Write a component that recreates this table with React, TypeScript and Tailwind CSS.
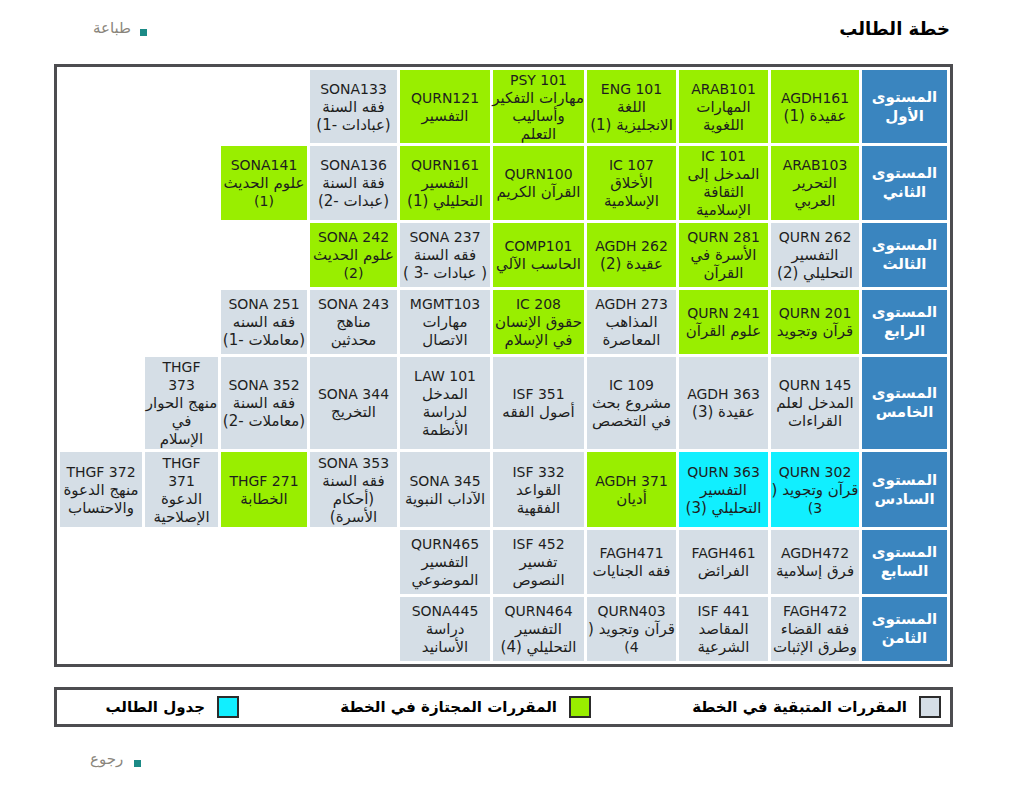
import React from 'react';

type Kind = 'g' | 's' | 'c';
interface Course {
  l: string[];
  k: Kind;
}

const bgOf: Record<Kind, string> = {
  g: 'bg-[#99ee00]',
  s: 'bg-[#d5dee6]',
  c: 'bg-[#11efff]',
};

const c = (k: Kind, ...l: string[]): Course => ({ k, l });

const LEVELS: { name: string[]; h: string; cells: Course[] }[] = [
  {
    name: ['المستوى', 'الأول'],
    h: 'h-[73px]',
    cells: [
      c('g', 'AGDH161', 'عقيدة (1)'),
      c('g', 'ARAB101', 'المهارات', 'اللغوية'),
      c('g', 'ENG 101', 'اللغة', 'الانجليزية (1)'),
      c('g', 'PSY 101', 'مهارات التفكير', 'وأساليب', 'التعلم'),
      c('g', 'QURN121', 'التفسير'),
      c('s', 'SONA133', 'فقه السنة', '(عبادات -1)'),
    ],
  },
  {
    name: ['المستوى', 'الثاني'],
    h: 'h-[74px]',
    cells: [
      c('g', 'ARAB103', 'التحرير', 'العربي'),
      c('g', 'IC 101', 'المدخل إلى', 'الثقافة', 'الإسلامية'),
      c('g', 'IC 107', 'الأخلاق', 'الإسلامية'),
      c('g', 'QURN100', 'القرآن الكريم'),
      c('g', 'QURN161', 'التفسير', 'التحليلي (1)'),
      c('s', 'SONA136', 'فقة السنة', '(عبدات -2)'),
      c('g', 'SONA141', 'علوم الحديث', '(1)'),
    ],
  },
  {
    name: ['المستوى', 'الثالث'],
    h: 'h-[64px]',
    cells: [
      c('s', 'QURN 262', 'التفسير', 'التحليلي (2)'),
      c('g', 'QURN 281', 'الأسرة في', 'القرآن'),
      c('g', 'AGDH 262', 'عقيدة (2)'),
      c('g', 'COMP101', 'الحاسب الآلي'),
      c('s', 'SONA 237', 'فقه السنة', '( عبادات -3 )'),
      c('g', 'SONA 242', 'علوم الحديث', '(2)'),
    ],
  },
  {
    name: ['المستوى', 'الرابع'],
    h: 'h-[64px]',
    cells: [
      c('g', 'QURN 201', 'قرآن وتجويد'),
      c('g', 'QURN 241', 'علوم القرآن'),
      c('s', 'AGDH 273', 'المذاهب', 'المعاصرة'),
      c('g', 'IC 208', 'حقوق الإنسان', 'في الإسلام'),
      c('s', 'MGMT103', 'مهارات', 'الاتصال'),
      c('s', 'SONA 243', 'مناهج', 'محدثين'),
      c('s', 'SONA 251', 'فقه السنه', '(معاملات -1)'),
    ],
  },
  {
    name: ['المستوى', 'الخامس'],
    h: 'h-[92px]',
    cells: [
      c('s', 'QURN 145', 'المدخل لعلم', 'القراءات'),
      c('s', 'AGDH 363', 'عقيدة (3)'),
      c('s', 'IC 109', 'مشروع بحث', 'في التخصص'),
      c('s', 'ISF 351', 'أصول الفقه'),
      c('s', 'LAW 101', 'المدخل', 'لدراسة', 'الأنظمة'),
      c('s', 'SONA 344', 'التخريج'),
      c('s', 'SONA 352', 'فقه السنة', '(معاملات -2)'),
      c('s', 'THGF', '373', 'منهج الحوار', 'في', 'الإسلام'),
    ],
  },
  {
    name: ['المستوى', 'السادس'],
    h: 'h-[75px]',
    cells: [
      c('c', 'QURN 302', 'قرآن وتجويد (', '3)'),
      c('c', 'QURN 363', 'التفسير', 'التحليلي (3)'),
      c('g', 'AGDH 371', 'أديان'),
      c('s', 'ISF 332', 'القواعد', 'الفقهية'),
      c('s', 'SONA 345', 'الآداب النبوية'),
      c('s', 'SONA 353', 'فقه السنة', '(أحكام', 'الأسرة)'),
      c('g', 'THGF 271', 'الخطابة'),
      c('s', 'THGF', '371', 'الدعوة', 'الإصلاحية'),
      c('s', 'THGF 372', 'منهج الدعوة', 'والاحتساب'),
    ],
  },
  {
    name: ['المستوى', 'السابع'],
    h: 'h-[64px]',
    cells: [
      c('s', 'AGDH472', 'فرق إسلامية'),
      c('s', 'FAGH461', 'الفرائض'),
      c('s', 'FAGH471', 'فقه الجنايات'),
      c('s', 'ISF 452', 'تفسير', 'النصوص'),
      c('s', 'QURN465', 'التفسير', 'الموضوعي'),
    ],
  },
  {
    name: ['المستوى', 'الثامن'],
    h: 'h-[64px]',
    cells: [
      c('s', 'FAGH472', 'فقه القضاء', 'وطرق الإثبات'),
      c('s', 'ISF 441', 'المقاصد', 'الشرعية'),
      c('s', 'QURN403', 'قرآن وتجويد (', '4)'),
      c('s', 'QURN464', 'التفسير', 'التحليلي (4)'),
      c('s', 'SONA445', 'دراسة', 'الأسانيد'),
    ],
  },
];

const COLS = ['w-[85px]', 'w-[88px]', 'w-[89px]', 'w-[89px]', 'w-[91px]', 'w-[90px]', 'w-[87px]', 'w-[86px]', 'w-[73px]', 'w-[82px]'];

const isArabic = (s: string) => /[\u0600-\u06FF]/.test(s);

const Bullet = () => <span className="inline-block w-[7px] h-[7px] bg-[#1b8a86]" />;

const LegendItem = ({ color, label, w }: { color: string; label: string; w: string }) => (
  <div className={`flex items-center gap-[12px] ${w}`}>
    <span className={`w-[22px] h-[22px] border-2 border-[#2c2c2c] ${color}`} />
    <span className="font-bold text-[15px] text-black">{label}</span>
  </div>
);

export default function App() {
  return (
    <div className="w-[1024px] min-h-[788px] bg-white font-['DejaVu_Sans',sans-serif]">
      <div className="ml-[54px] w-[899px]">
        {/* Title bar */}
        <div className="flex justify-between items-center h-[56px] pt-[1px]">
          <div className="flex items-end gap-[9px] pl-[39px]">
            <span className="text-[15px] text-[#8a857c] leading-none">طباعة</span>
            <Bullet />
          </div>
          <h1 dir="rtl" className="font-bold text-[18px] text-black pr-[3px]">خطة الطالب</h1>
        </div>

        {/* Plan table */}
        <div className="mt-[8px]">
          <table
            dir="rtl"
            className="table-fixed w-[899px] border-separate border-spacing-[3px] border-[3px] border-[#4d4d50] text-[14px] leading-[18px]"
          >
            <colgroup>
              {COLS.map((w, i) => (
                <col key={i} className={w} />
              ))}
            </colgroup>
            <tbody>
              {LEVELS.map((lv, r) => (
                <tr key={r} className={lv.h}>
                  <td className="bg-[#3a85bf] text-white font-bold text-[15px] leading-[19px] text-center align-middle">
                    {lv.name.map((n, i) => (
                      <div key={i}>{n}</div>
                    ))}
                  </td>
                  {Array.from({ length: 9 }).map((_, i) => {
                    const cell = lv.cells[i];
                    if (!cell) return <td key={i} />;
                    return (
                      <td key={i} className={`${bgOf[cell.k]} text-[#1e1e1e] text-center align-middle`}>
                        {cell.l.map((t, j) => (
                          <div key={j} className={`whitespace-nowrap ${isArabic(t) ? 'text-[15px]' : ''}`}>
                            {t}
                          </div>
                        ))}
                      </td>
                    );
                  })}
                </tr>
              ))}
            </tbody>
          </table>
        </div>

        {/* Legend */}
        <div dir="rtl" className="mt-[20px] h-[40px] border-[3px] border-[#4d4d50] flex items-center pr-[9px]">
          <LegendItem color="bg-[#d5dee6]" label="المقررات المتبقية في الخطة" w="w-[350px]" />
          <LegendItem color="bg-[#99ee00]" label="المقررات المجتازة في الخطة" w="w-[352px]" />
          <LegendItem color="bg-[#11efff]" label="جدول الطالب" w="w-auto" />
        </div>

        {/* Back link */}
        <div className="flex items-end gap-[11px] pl-[36px] mt-[25px]">
          <span className="text-[15px] text-[#8a857c] leading-none">رجوع</span>
          <Bullet />
        </div>
      </div>
    </div>
  );
}
